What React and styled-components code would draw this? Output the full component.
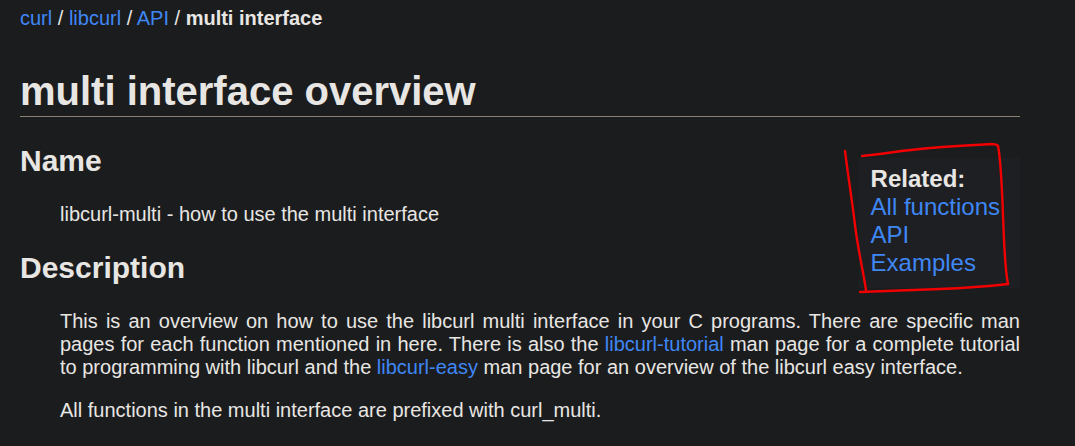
import React from 'react';
import styled, { createGlobalStyle } from 'styled-components';

const GlobalStyle = createGlobalStyle`
  html, body {
    margin: 0;
    padding: 0;
    background-color: #1b1c1e;
    color: #e8e6e3;
    font-family: "Liberation Sans", Arial, sans-serif;
    font-size: 20px;
  }
`;

const Page = styled.div`
  position: relative;
  width: 1000px;
  padding: 7px 0 0 20px;
  min-height: 439px;
`;

const Link = styled.a`
  color: #3f87f5;
  text-decoration: none;
`;

const Crumbs = styled.div`
  line-height: 23px;
`;

const Current = styled.b`
  font-weight: bold;
`;

const Title = styled.h1`
  font-size: 40px;
  line-height: 46px;
  margin: 38px 0 26.8px;
  padding-bottom: 2px;
  border-bottom: 1px solid #8a8275;
`;

const Heading = styled.h2`
  font-size: 30px;
  line-height: 34px;
  margin: 25px 0;
`;

const Text = styled.p`
  line-height: 23px;
  margin: 20px 0 20px 40px;
  text-align: ${({ justify }) => (justify ? 'justify' : 'left')};
`;

const Related = styled.div`
  float: right;
  margin-top: 14px;
  padding: 7px 20px 11px 12px;
  background-color: #1e1f22;
  font-size: 24px;
  line-height: 28px;
`;

const RelatedItem = styled.div`
  font-weight: ${({ bold }) => (bold ? 'bold' : 'normal')};
`;

const Annotation = styled.svg`
  position: absolute;
  top: 0;
  left: 0;
  pointer-events: none;
`;

const RedMarker = () => (
  <Annotation width="1075" height="446" viewBox="0 0 1075 446">
    <g fill="none" stroke="#f20000" strokeWidth="2.4" strokeLinecap="round" strokeLinejoin="round">
      <path d="M845,151 C848,175 852,200 855,225 C858,250 863,270 866,290" />
      <path d="M862,156 C890,153 905,150 930,148 C955,146 975,145 990,144 C994,144 997,144 998,146" />
      <path d="M998,146 C1001,160 1002,190 1003,215 C1004,245 1005,270 1008,284" />
      <path d="M860,292 C890,291 915,290 940,289 C965,288 990,286 1008,284" />
    </g>
  </Annotation>
);

export default function App() {
  return (
    <>
      <GlobalStyle />
      <Page>
        <Crumbs>
          <Link href="#">curl</Link> / <Link href="#">libcurl</Link> / <Link href="#">API</Link> / <Current>multi interface</Current>
        </Crumbs>
        <Title>multi interface overview</Title>
        <Related>
          <RelatedItem bold>Related:</RelatedItem>
          <RelatedItem><Link href="#">All functions</Link></RelatedItem>
          <RelatedItem><Link href="#">API</Link></RelatedItem>
          <RelatedItem><Link href="#">Examples</Link></RelatedItem>
        </Related>
        <Heading>Name</Heading>
        <Text>libcurl-multi - how to use the multi interface</Text>
        <Heading>Description</Heading>
        <Text justify>
          This is an overview on how to use the libcurl multi interface in your C programs. There are specific man
          pages for each function mentioned in here. There is also the <Link href="#">libcurl-tutorial</Link> man page for a complete tutorial
          to programming with libcurl and the <Link href="#">libcurl-easy</Link> man page for an overview of the libcurl easy interface.
        </Text>
        <Text>All functions in the multi interface are prefixed with curl_multi.</Text>
        <RedMarker />
      </Page>
    </>
  );
}
